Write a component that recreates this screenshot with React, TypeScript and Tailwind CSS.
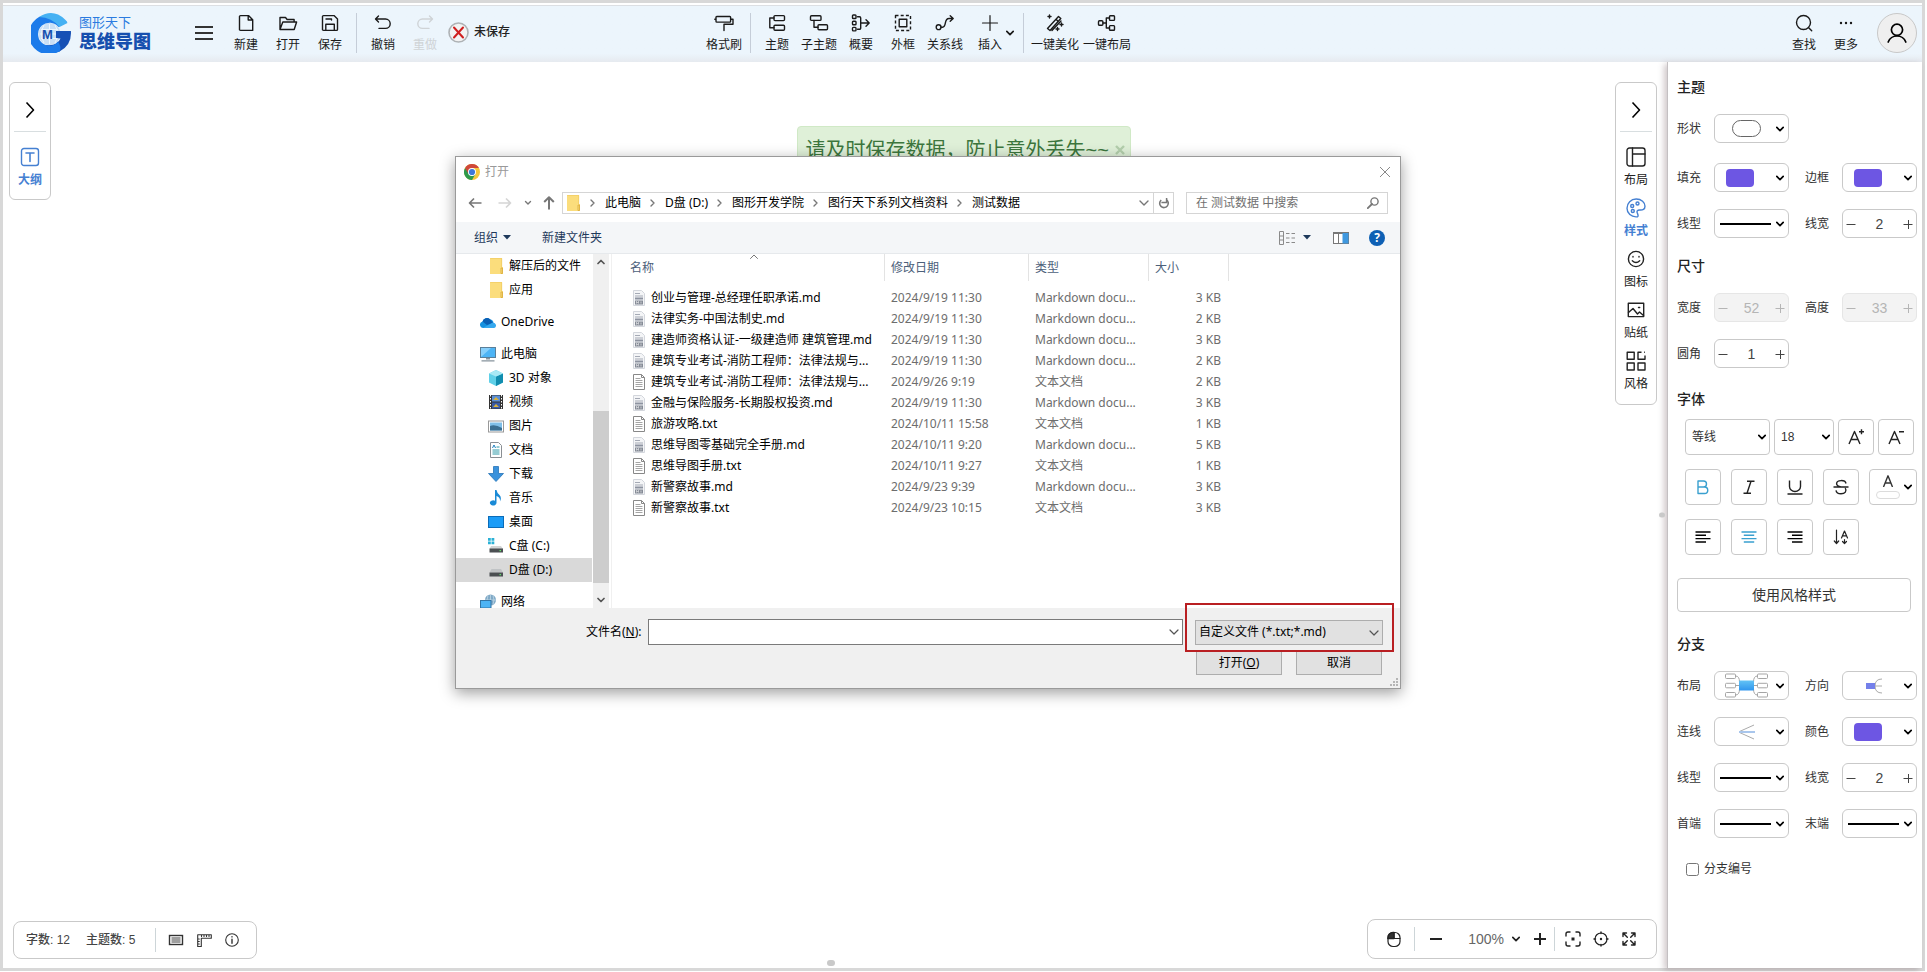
import { useState } from 'react';
import type { ReactNode } from 'react';

type IconProps = { children: ReactNode; size?: string; className?: string; box?: string };

function Icon({ children, size = 'w-5 h-5', className = '', box = '0 0 20 20' }: IconProps) {
  return (
    <svg
      viewBox={box}
      className={`${size} shrink-0 ${className}`}
      fill="none"
      stroke="currentColor"
      strokeWidth="1.4"
      strokeLinecap="round"
      strokeLinejoin="round"
      aria-hidden="true"
    >
      {children}
    </svg>
  );
}

function Caret({ className = '' }: { className?: string }) {
  return (
    <Icon size="w-2 h-2" box="0 0 8 8" className={className}>
      <path d="M0.8 2.4L4 5.6l3.2-3.2" strokeWidth="1.7" />
    </Icon>
  );
}

const fileTools = [
  {
    label: '新建',
    icon: <path d="M4.5 2.6h8l4.2 4.2v10.6H4.5a1 1 0 0 1-1-1V3.6a1 1 0 0 1 1-1zM12.2 2.8V7h4.3" />,
  },
  {
    label: '打开',
    icon: <path d="M2 16.500V4.5h5.500l1.600 2h7V9M2 16.500L4.800 9H18.600l-2.400 7.500z" />,
  },
  {
    label: '保存',
    icon: (
      <path d="M3.500 2.600H14l3.500 3.500v10.300a1 1 0 0 1-1 1h-13a1 1 0 0 1-1-1V3.600a1 1 0 0 1 1-1zM5.800 17.200v-6h8.500v6M6 6h5.500v1" />
    ),
  },
];

const topicTools = [
  {
    label: '主题',
    icon: (
      <>
        <rect x="7" y="2.6" width="10.5" height="5" rx="1" />
        <rect x="7" y="12.2" width="10.5" height="5" rx="1" />
        <path d="M7 5H2.800v9.700H7" />
      </>
    ),
  },
  {
    label: '子主题',
    icon: (
      <>
        <rect x="1.5" y="2.8" width="10.5" height="4.6" rx="1" />
        <rect x="9" y="11.8" width="9.5" height="5" rx="1" />
        <path d="M5 7.500v6.800h4" />
      </>
    ),
  },
  {
    label: '概要',
    icon: (
      <>
        <rect x="1.5" y="2" width="3.5" height="3.5" rx="0.8" />
        <rect x="1.5" y="8.2" width="3.5" height="3.5" rx="0.8" />
        <rect x="1.5" y="14.4" width="3.5" height="3.5" rx="0.8" />
        <path d="M6.500 3.700H8.500a1.200 1.200 0 0 1 1.200 1.200v10.200a1.200 1.200 0 0 1-1.200 1.200H6.500M10 10h8M15 6.800L18.200 10 15 13.200" />
      </>
    ),
  },
  {
    label: '外框',
    icon: (
      <>
        <rect x="2.5" y="2.5" width="15" height="15" strokeDasharray="3 2.2" strokeLinecap="butt" />
        <rect x="6.2" y="6.2" width="7.6" height="7.6" />
      </>
    ),
  },
  {
    label: '关系线',
    icon: (
      <>
        <circle cx="3.6" cy="14.2" r="2.4" />
        <path d="M6 14.200h1.500c4.500 0 1-8.700 6.500-8.700h4M15.200 2.700L18.200 5.500l-3 2.800" />
      </>
    ),
  },
];

function ToolButton({
  label,
  children,
  wide = 'w-[42px]',
  disabled = false,
  caret = false,
}: {
  label: string;
  children: ReactNode;
  wide?: string;
  disabled?: boolean;
  caret?: boolean;
}) {
  return (
    <button
      type="button"
      disabled={disabled}
      className={`relative flex flex-col items-center gap-1 whitespace-nowrap ${wide} ${
        disabled ? 'text-[#cfd3d6]' : 'text-[#1a1a1a]'
      }`}
    >
      <Icon>{children}</Icon>
      <span className="text-xs leading-4">{label}</span>
      {caret && <Caret className="absolute right-0 top-4" />}
    </button>
  );
}

function Divider() {
  return <span className="mx-[5px] h-10 w-px bg-[#c5cdd8]" />;
}

function Logo() {
  return (
    <div className="flex items-center gap-2">
      <svg viewBox="0 0 40 40" className="h-10 w-10" aria-hidden="true">
        <circle cx="18.5" cy="21" r="11" fill="#c9dff5" />
        <path
          d="M9 21h19M10 16.500h17M10 25.500h17M18.500 11v20M13 12q-5 9 0 18M24 12q5 9 0 18"
          stroke="#eef6fd"
          fill="none"
        />
        <path
          d="M36 9L27.500 14A11.500 11.500 0 1 0 27 29L29 38A20 20 0 1 1 8 4Q24 -1 36 9z"
          fill="#1c7bea"
        />
        <path d="M8 4Q22-5 34 6.500 36 8 36.500 10L28.500 14Q21 4.500 8 4z" fill="#45b1f3" />
        <path d="M25 18h14.900Q41 32 28.500 38.500 18 38 15 32 26 33.500 29.500 25.500L25 25z" fill="#1650b5" />
        <path d="M15 32q7 2.500 12-3.500 4 6 1.500 10L20 40z" fill="#1c7bea" />
        <text
          x="16.5"
          y="25.5"
          fontSize="13"
          fontWeight="700"
          fill="#164fae"
          textAnchor="middle"
          fontFamily="Liberation Sans"
        >
          M
        </text>
      </svg>
      <div className="flex flex-col">
        <span className="text-[13px] leading-[18px] text-[#2b7be0]">图形天下</span>
        <span className="text-lg font-black leading-5 text-[#164fae]">思维导图</span>
      </div>
    </div>
  );
}

function Header() {
  return (
    <header className="flex h-[57px] items-center border-t border-[#dcdfe3] bg-gradient-to-b from-[#ecf5fc] from-85% to-[#e6eaef] pb-0.5 pl-7 pr-[5px]">
      <Logo />
      <button type="button" aria-label="菜单" className="ml-11 flex w-[18px] flex-col gap-1">
        <span className="h-0.5 bg-[#333]" />
        <span className="h-0.5 bg-[#333]" />
        <span className="h-0.5 bg-[#333]" />
      </button>
      <div className="ml-3 flex">
        {fileTools.map((tool) => (
          <ToolButton key={tool.label} label={tool.label}>
            {tool.icon}
          </ToolButton>
        ))}
      </div>
      <Divider />
      <ToolButton label="撤销">
        <path d="M5.500 3L2.500 6l3 3M2.800 6h9.700a4.700 4.700 0 0 1 0 9.400H6" />
      </ToolButton>
      <ToolButton label="重做" disabled>
        <path d="M14.500 3l3 3-3 3M17.200 6H7.500a4.700 4.700 0 0 0 0 9.400H14" />
      </ToolButton>
      <span className="ml-0.5 flex items-center gap-[5px] pb-0.5 text-xs font-medium text-[#222]">
        <svg viewBox="0 0 21 21" className="h-[21px] w-[21px]" aria-hidden="true">
          <circle cx="10.5" cy="10.5" r="9.5" fill="#f3f3f3" stroke="#aeb2b5" strokeWidth="1.6" />
          <path d="M6 5.500l9 10M15 5.500l-9 10" stroke="#cf1f1f" strokeWidth="2" strokeLinecap="round" />
        </svg>
        未保存
      </span>

      <div className="ml-[193px] flex items-center">
        <ToolButton label="格式刷">
          <path d="M2.800 3.500h13a.8.8 0 0 1 .8.8v4a.8.8 0 0 1-.8.8h-13a.8.8 0 0 1-.8-.8v-4a.8.8 0 0 1 .8-.8zM.8 6.300H2M16.800 6.300h2.200v5h-9v2.200M10 13.500v4" />
        </ToolButton>
        <Divider />
        {topicTools.map((tool) => (
          <ToolButton key={tool.label} label={tool.label}>
            {tool.icon}
          </ToolButton>
        ))}
        <ToolButton label="插入" wide="w-12" caret>
          <path d="M10 2.500v15M2.500 10h15" strokeWidth="1.2" />
        </ToolButton>
        <span className="w-1" />
        <Divider />
        <ToolButton label="一键美化" wide="w-[52px]">
          <path d="M2.500 15.500L13.500 3.500l2.300 2L5 17.500zM7 17.500l9-9.500M11 6.200l2.300 2.200M4.500 2v3M3 3.500h3M16.500 10v3M15 11.500h3M12.500 14.500v3M11 16h3" />
        </ToolButton>
        <ToolButton label="一键布局" wide="w-[52px]">
          <rect x="1.5" y="7.8" width="4.4" height="4.4" rx="1" />
          <rect x="12.5" y="2.8" width="5" height="4.6" rx="0.8" />
          <rect x="12.5" y="12.6" width="5" height="4.6" rx="0.8" />
          <path d="M6 10h3.300M12.500 5H9.300v10h3.200" />
        </ToolButton>
      </div>

      <div className="ml-auto flex items-center">
        <ToolButton label="查找">
          <circle cx="9.5" cy="9.5" r="7" />
          <path d="M14.700 14.700l3 3" />
        </ToolButton>
        <ToolButton label="更多">
          <path d="M5 10h.01M10 10h.01M15 10h.01" strokeWidth="2.4" />
        </ToolButton>
        <button
          type="button"
          aria-label="账户"
          className="ml-2.5 flex h-10 w-10 items-center justify-center rounded-full border border-[#c8c8c8] bg-[#efefef]"
        >
          <Icon className="text-black">
            <circle cx="10" cy="6.8" r="5.6" strokeWidth="1.7" />
            <path d="M1.200 19c1.800-4.500 5-6 8.800-6s7 1.500 8.800 6" strokeWidth="1.7" />
          </Icon>
        </button>
      </div>
    </header>
  );
}

const sideTabs = [
  {
    label: '布局',
    icon: (
      <>
        <rect x="1" y="1" width="18" height="18" rx="2.5" />
        <path d="M6.500 1v18M6.500 7H19" />
      </>
    ),
  },
  {
    label: '样式',
    active: true,
    icon: (
      <>
        <path d="M11.500 18.800C5 19.600 1 15 1 10.200 1 5 5 1 10.200 1 15.500 1 19 4.500 19 8.200c0 3.300-2.500 4-5 3.800-2.500-.2-3.500 1.200-2.700 3 .7 1.500 1.200 3.400.2 3.800z" />
        <circle cx="6.2" cy="8" r="1.5" />
        <circle cx="11.5" cy="5.5" r="1.5" />
        <circle cx="6.8" cy="13" r="1.5" />
      </>
    ),
  },
  {
    label: '图标',
    icon: (
      <>
        <circle cx="10" cy="10" r="7.6" />
        <path d="M7 7.500v.5M13 7.500v.5M6.300 11.800q3.700 3.600 7.400 0" />
      </>
    ),
  },
  {
    label: '贴纸',
    icon: (
      <>
        <rect x="2.3" y="3.2" width="15.4" height="13.4" />
        <path d="M2.500 12.500l4.500-4 4.500 5.500 2-2 4 3.500M12.500 7.500h1.200" />
      </>
    ),
  },
  {
    label: '风格',
    icon: (
      <path
        d="M1.200 1.200h7v7h-7zM1.200 12h7v7h-7zM12 12h7v7h-7zM15.500 1.200H12v7h7V4.500M18.200 1.200h.8"
        strokeLinecap="butt"
      />
    ),
  },
];

function ExpandButton({ label }: { label: string }) {
  return (
    <button
      type="button"
      aria-label={label}
      className="flex h-[49px] w-8 items-center justify-center border-b border-[#d8dee0] pt-1.5"
    >
      <Icon className="text-black">
        <path d="M6.500 2.500l7 7.500-7 7.500" strokeLinecap="butt" strokeWidth="1.6" />
      </Icon>
    </button>
  );
}

function OutlineBar() {
  return (
    <div className="flex h-[118px] w-[42px] flex-col items-center rounded-md border border-[#c9c9c9] bg-white">
      <ExpandButton label="展开" />
      <button type="button" className="mt-[15px] flex flex-col items-center gap-[3px] text-[#4580d2]">
        <Icon>
          <rect x="1.5" y="1.5" width="17" height="17" rx="2.5" />
          <path d="M6 6h8M10 6v8.500" strokeWidth="1.6" />
        </Icon>
        <span className="text-xs font-bold leading-5">大纲</span>
      </button>
    </div>
  );
}

function StyleTabs() {
  return (
    <nav className="flex h-[323px] w-[42px] flex-col items-center rounded-md border border-[#c9c9c9] bg-white">
      <ExpandButton label="收起" />
      <div className="mt-[15px] flex flex-col gap-2">
        {sideTabs.map((tab) => (
          <button
            key={tab.label}
            type="button"
            className={`flex flex-col items-center gap-[3px] ${tab.active ? 'font-bold text-[#4580d2]' : 'text-[#222]'}`}
          >
            <Icon>{tab.icon}</Icon>
            <span className="text-xs leading-5">{tab.label}</span>
          </button>
        ))}
      </div>
    </nav>
  );
}

function StatusBar() {
  return (
    <div className="flex h-[38px] items-center rounded-lg border border-[#c9c9c9] bg-white pl-3 pr-3.5 text-xs font-medium text-[#444]">
      <span>字数: 12</span>
      <span className="ml-4">主题数: 5</span>
      <span className="ml-5 mr-2.5 h-6 w-px bg-[#cdd5d8]" />
      <div className="flex gap-2 text-[#333]">
        <button type="button" aria-label="键盘">
          <Icon>
            <rect x="3.5" y="5.5" width="13" height="9" strokeLinejoin="miter" />
            <path d="M5.500 8h9M5.500 10h9M5.500 12h9" strokeWidth="1.4" stroke="#808080" strokeLinecap="butt" />
          </Icon>
        </button>
        <button type="button" aria-label="标尺">
          <Icon>
            <path
              d="M3.700 4.700h13.600v3.500H7.300v8.300H3.700zM7.500 5v1.500M10 5v1.500M12.500 5v1.500M15 5v1.500M4 9h1.300M4 11.500h1.300M4 14h1.300"
              strokeWidth="1.1"
            />
          </Icon>
        </button>
        <button type="button" aria-label="信息">
          <Icon>
            <circle cx="10" cy="10" r="6.3" strokeWidth="1.1" />
            <path d="M10 9.300v4M10 6.600v.3" />
          </Icon>
        </button>
      </div>
    </div>
  );
}

function ZoomBar() {
  return (
    <div className="flex h-10 items-center rounded-lg border border-[#c9c9c9] bg-white pl-4 pr-[17px] text-[#222]">
      <button type="button" aria-label="鼠标">
        <Icon>
          <rect x="4" y="3.5" width="12" height="14" rx="5" strokeWidth="1.2" />
          <path d="M4 9.500h12M10 3.500v6" strokeWidth="1.2" />
          <path d="M4 9.500h6v-6H9a5 5 0 0 0-5 5z" fill="#333" />
        </Icon>
      </button>
      <span className="mx-2.5 h-6 w-px bg-[#cdd5d8]" />
      <button type="button" aria-label="缩小" className="ml-[5px]">
        <Icon size="w-3 h-3" box="0 0 12 12">
          <path d="M0 6h12" strokeWidth="2" strokeLinecap="butt" />
        </Icon>
      </button>
      <button type="button" className="ml-[26px] flex items-center gap-2 text-sm text-[#666]">
        100%
        <Caret className="text-[#222]" />
      </button>
      <button type="button" aria-label="放大" className="ml-3.5">
        <Icon size="w-3 h-3" box="0 0 12 12">
          <path d="M0 6h12M6 0v12" strokeWidth="2" strokeLinecap="butt" />
        </Icon>
      </button>
      <span className="mx-2 h-6 w-px bg-[#cdd5d8]" />
      <div className="flex gap-2">
        <button type="button" aria-label="聚焦">
          <Icon>
            <path d="M3 7V5a2 2 0 0 1 2-2h2M13 3h2a2 2 0 0 1 2 2v2M17 13v2a2 2 0 0 1-2 2h-2M7 17H5a2 2 0 0 1-2-2v-2" />
            <rect x="8.5" y="8.5" width="3" height="3" fill="currentColor" stroke="none" />
          </Icon>
        </button>
        <button type="button" aria-label="居中">
          <Icon>
            <circle cx="10" cy="10" r="6" strokeWidth="1.2" />
            <path d="M10 3v1.500M10 15.500V17M3 10h1.500M15.500 10H17" />
            <circle cx="10" cy="10" r="1.2" fill="currentColor" stroke="none" />
          </Icon>
        </button>
        <button type="button" aria-label="全屏">
          <Icon>
            <path d="M4 7.500V4h3.500M4.300 4.300l4 4M12.500 4H16v3.500M15.700 4.300l-4 4M16 12.500V16h-3.500M15.700 15.700l-4-4M7.500 16H4v-3.500M4.300 15.700l4-4" />
          </Icon>
        </button>
      </div>
    </div>
  );
}

function Field({ id, label, children }: { id: string; label: string; children: ReactNode }) {
  return (
    <div className="flex w-28 items-center">
      <label htmlFor={id} className="flex-1 text-xs leading-5">
        {label}
      </label>
      {children}
    </div>
  );
}

function Picker({ id, label, children }: { id: string; label: string; children: ReactNode }) {
  return (
    <Field id={id} label={label}>
      <button
        id={id}
        type="button"
        aria-haspopup="listbox"
        className="flex h-[29px] w-[75px] items-center rounded-md border border-[#c9c9c9] bg-white pr-1"
      >
        <span className="flex flex-1 justify-center">{children}</span>
        <Caret className="text-black" />
      </button>
    </Field>
  );
}

function Stepper({
  id,
  label,
  initial,
  disabled = false,
}: {
  id: string;
  label: string;
  initial: number;
  disabled?: boolean;
}) {
  const [value, setValue] = useState(initial);

  return (
    <Field id={id} label={label}>
      <div
        className={`flex h-[29px] w-[75px] items-center justify-between rounded-md border px-[3px] ${
          disabled ? 'border-[#e6e6e6] bg-[#f3f3f3] text-[#b5b5b5]' : 'border-[#c9c9c9] bg-white text-[#444]'
        }`}
      >
        <button type="button" aria-label="减少" disabled={disabled} onClick={() => setValue(value - 1)}>
          <Icon size="w-2.5 h-2.5" box="0 0 10 10">
            <path d="M0.500 5.500h9" strokeWidth="1" strokeLinecap="butt" />
          </Icon>
        </button>
        <input
          id={id}
          type="text"
          value={value}
          disabled={disabled}
          onChange={(e) => setValue(Number(e.target.value) || 0)}
          className="w-8 bg-transparent text-center text-sm leading-5 outline-none"
        />
        <button type="button" aria-label="增加" disabled={disabled} onClick={() => setValue(value + 1)}>
          <Icon size="w-2.5 h-2.5" box="0 0 10 10">
            <path d="M0.500 5.500h9M5.500 1v9" strokeWidth="1" strokeLinecap="butt" />
          </Icon>
        </button>
      </div>
    </Field>
  );
}

const Swatch = () => <span className="mr-3 h-[18px] w-7 rounded-sm bg-[#6d56e3]" />;
const Line = () => <span className="h-0.5 w-[51px] bg-black" />;

function SectionTitle({ children }: { children: ReactNode }) {
  return <h2 className="text-sm font-medium leading-5 text-[#222]">{children}</h2>;
}

function SquareButton({ label, active = false, children }: { label: string; active?: boolean; children: ReactNode }) {
  return (
    <button
      type="button"
      aria-label={label}
      className={`flex h-9 w-9 items-center justify-center rounded border border-[#c9c9c9] bg-white ${
        active ? 'text-[#3aa0cf]' : 'text-[#222]'
      }`}
    >
      {children}
    </button>
  );
}

function StylePanel() {
  return (
    <aside className="relative w-[255px] shrink-0 border-l border-[#c4c0c2] bg-white pb-2 pl-[9px] pr-[5px] pt-[15px] text-[#333] shadow-[-3px_2px_6px_rgba(90,60,70,0.28)]">
      <SectionTitle>主题</SectionTitle>
      <div className="mt-[17px]">
        <Picker id="shape" label="形状">
          <span className="ml-0.5 h-[17px] w-[29px] rounded-full border border-[#666]" />
        </Picker>
      </div>
      <div className="mt-5 flex flex-wrap justify-between gap-y-[17px]">
        <Picker id="fill" label="填充">
          <Swatch />
        </Picker>
        <Picker id="border" label="边框">
          <Swatch />
        </Picker>
        <Picker id="line" label="线型">
          <Line />
        </Picker>
        <Stepper id="line-width" label="线宽" initial={2} />
      </div>

      <div className="mt-[18px]">
        <SectionTitle>尺寸</SectionTitle>
      </div>
      <div className="mt-[17px] flex flex-wrap justify-between gap-y-[17px]">
        <Stepper id="width" label="宽度" initial={52} disabled />
        <Stepper id="height" label="高度" initial={33} disabled />
        <Stepper id="radius" label="圆角" initial={1} />
      </div>

      <div className="mt-[21px]">
        <SectionTitle>字体</SectionTitle>
      </div>
      <div className="mt-2.5 flex gap-1 pl-2">
        <div className="relative w-[85px]">
          <select
            aria-label="字体"
            className="h-9 w-full appearance-none rounded border border-[#c9c9c9] bg-white pl-1.5 text-xs"
          >
            <option>等线</option>
          </select>
          <Caret className="pointer-events-none absolute right-1 top-3.5 text-black" />
        </div>
        <div className="relative w-[60px]">
          <select
            aria-label="字号"
            className="h-9 w-full appearance-none rounded border border-[#c9c9c9] bg-white pl-1.5 text-xs"
          >
            <option>18</option>
          </select>
          <Caret className="pointer-events-none absolute right-1 top-3.5 text-black" />
        </div>
        <SquareButton label="增大字号">
          <Icon>
            <path d="M3 17L8.500 4.500 14 17M5 12.500h7M15.500 2.200v5M13 4.700h5" strokeLinecap="butt" />
          </Icon>
        </SquareButton>
        <SquareButton label="减小字号">
          <Icon>
            <path d="M3 17L8.500 4.500 14 17M5 12.500h7M13 4.700h5" strokeLinecap="butt" />
          </Icon>
        </SquareButton>
      </div>
      <div className="mt-3.5 flex gap-2.5 pl-2">
        <SquareButton label="加粗" active>
          <Icon>
            <path d="M5 4h5.500a3 3 0 0 1 0 6H5zM5 10h6.500a3.200 3.200 0 0 1 0 6.500H5z" />
          </Icon>
        </SquareButton>
        <SquareButton label="斜体">
          <Icon>
            <path d="M8 4.200h7.500M4.500 16.200H12M12 4.200L8 16.200" strokeLinecap="butt" />
          </Icon>
        </SquareButton>
        <SquareButton label="下划线">
          <Icon>
            <path d="M4.500 3.500v6a5.500 5 0 0 0 11 0v-6M2.500 17h15" strokeLinecap="butt" />
          </Icon>
        </SquareButton>
        <SquareButton label="删除线">
          <Icon>
            <path
              d="M15 6.500c-.8-4-9.200-3.800-9.400 0 0 2 2 3 4.400 3.500M2.500 10h15M14.200 11.200c2 2.800-.2 5.600-4.200 5.600-3.500 0-4.700-1.500-5-3.500"
              strokeLinecap="butt"
            />
          </Icon>
        </SquareButton>
        <button
          type="button"
          aria-label="文字颜色"
          className="flex h-9 w-12 items-center justify-between rounded border border-[#c9c9c9] bg-white pl-1.5 pr-1 text-[#333]"
        >
          <span className="flex flex-col items-center gap-1">
            <Icon size="w-3 h-3" box="0 0 12 12">
              <path d="M1.500 12L6 .8 10.500 12M3.200 8h5.600" strokeLinecap="butt" />
            </Icon>
            <span className="h-2 w-6 rounded-full border border-[#dcdcdc]" />
          </span>
          <Caret className="text-black" />
        </button>
      </div>
      <div className="mt-3.5 flex gap-2.5 pl-2">
        <SquareButton label="左对齐">
          <Icon className="text-black">
            <path d="M2.500 5h15M2.500 8.300H13M2.500 11.600h15M2.500 15H13" strokeLinecap="butt" />
          </Icon>
        </SquareButton>
        <SquareButton label="居中对齐" active>
          <Icon>
            <path d="M2.500 5h15M4.800 8.300h10.400M2.500 11.600h15M4.800 15h10.400" strokeLinecap="butt" />
          </Icon>
        </SquareButton>
        <SquareButton label="右对齐">
          <Icon className="text-black">
            <path d="M2.500 5h15M7 8.300h10.500M2.500 11.600h15M7 15h10.500" strokeLinecap="butt" />
          </Icon>
        </SquareButton>
        <SquareButton label="文字方向">
          <Icon>
            <path
              d="M5.500 3v13.500M3.300 14l2.200 2.500L7.700 14M10.500 11l3-7 3 7M11.500 8.800h4M13.500 12.500v4M11.500 14.500l2 2 2-2"
              strokeWidth="1.2"
            />
          </Icon>
        </SquareButton>
      </div>
      <div className="mt-[23px] pr-1.5">
        <button
          type="button"
          className="h-[34px] w-full rounded border border-[#c9c9c9] bg-white text-sm text-[#333]"
        >
          使用风格样式
        </button>
      </div>

      <div className="mt-[22px]">
        <SectionTitle>分支</SectionTitle>
      </div>
      <div className="mt-[17px] flex flex-wrap justify-between gap-y-[17px]">
        <Picker id="branch-layout" label="布局">
          <svg viewBox="0 0 43 25" className="ml-0.5 h-[25px] w-[43px]" fill="none" stroke="#a5a5a5" aria-hidden="true">
            <defs>
              <linearGradient id="node" x1="0" y1="0" x2="0" y2="1">
                <stop offset="0" stopColor="#62c3f5" />
                <stop offset="1" stopColor="#3096ee" />
              </linearGradient>
            </defs>
            <path d="M10.500 3q4 0 4 6M10.500 12.500h22M10.500 22q4 0 4-6M32.500 3q-4 0-4 6M32.500 22q-4 0-4-6" />
            <rect x="0.5" y="1" width="10" height="4.5" rx="1" fill="#fff" />
            <rect x="0.5" y="10.3" width="10" height="4.5" rx="1" fill="#fff" />
            <rect x="0.5" y="19.5" width="10" height="4.5" rx="1" fill="#fff" />
            <rect x="32.5" y="1" width="10" height="4.5" rx="1" fill="#fff" />
            <rect x="32.5" y="10.3" width="10" height="4.5" rx="1" fill="#fff" />
            <rect x="32.5" y="19.5" width="10" height="4.5" rx="1" fill="#fff" />
            <rect x="14" y="7.5" width="15" height="10" rx="1" fill="url(#node)" stroke="none" />
          </svg>
        </Picker>
        <Picker id="branch-direction" label="方向">
          <svg viewBox="0 0 16 16" className="h-4 w-4" fill="none" stroke="#aaa" aria-hidden="true">
            <path d="M16 1q-7 0-7 7 0 7 7 7M9 8h7" />
            <rect x="0" y="5" width="9" height="6" fill="#7480ea" stroke="none" />
          </svg>
        </Picker>
        <Picker id="branch-link" label="连线">
          <svg viewBox="0 0 16 16" className="ml-0.5 h-4 w-4" fill="none" stroke="#aaa" aria-hidden="true">
            <path d="M15 1L.5 7.500M15 15L.5 8.500" />
            <path d="M0 8h16" stroke="#a9c6ec" strokeWidth="2" />
          </svg>
        </Picker>
        <Picker id="branch-color" label="颜色">
          <Swatch />
        </Picker>
        <Picker id="branch-line" label="线型">
          <Line />
        </Picker>
        <Stepper id="branch-width" label="线宽" initial={2} />
        <Picker id="branch-start" label="首端">
          <Line />
        </Picker>
        <Picker id="branch-end" label="末端">
          <Line />
        </Picker>
      </div>
      <label className="mt-[21px] flex items-center gap-[5px] pl-[9px] text-xs leading-5">
        <input type="checkbox" className="h-[13px] w-[13px]" />
        分支编号
      </label>
    </aside>
  );
}

const path = ['此电脑', 'D盘 (D:)', '图形开发学院', '图行天下系列文档资料', '测试数据'];

const Folder = () => (
  <svg viewBox="0 0 16 16" className="h-4 w-4 shrink-0" aria-hidden="true">
    <path d="M2 0h12v9h1v7H2z" fill="#fbdd7c" />
    <path d="M13 10h1.500v5.500H13z" fill="#fbdd7c" stroke="#d9ab3a" strokeWidth="0.8" />
    <path d="M2.300.3h11.400v9" fill="none" stroke="#ecc558" strokeWidth="0.6" />
  </svg>
);

const treeIcons: Record<string, ReactNode> = {
  cloud: (
    <>
      <path d="M3 14a3.300 3.300 0 0 1-.5-6.500A4.500 4.500 0 0 1 10 5.300 4 4 0 0 1 13.500 9a2.600 2.600 0 0 1 0 5z" fill="#1590df" />
      <path d="M2.500 7.500A4.500 4.500 0 0 1 10 5.300L13 9l-6 2z" fill="#0a5fb4" />
      <path d="M3 14l8-4.500a3 3 0 0 1 5 2.500 2.400 2.400 0 0 1-2.500 2z" fill="#35a8ee" />
    </>
  ),
  pc: (
    <>
      <rect x="0.5" y="1.5" width="15" height="10" fill="#4db4f5" stroke="#5a7f99" />
      <path d="M1 11L11 2H1z" fill="#86cffb" />
      <path d="M6 12h4v1.500H6zM1.500 14.200h13v1.300h-13z" fill="#87949d" />
    </>
  ),
  cube: (
    <>
      <path d="M1 3.500L8 0l7 3.500v9L8 16l-7-3.500z" fill="#5fd0e8" />
      <path d="M8 6.500l7-3v9L8 16z" fill="#118daf" />
      <path d="M1 3.500L8 0l7 3.500-7 3z" fill="#a8e9f5" />
    </>
  ),
  film: (
    <>
      <rect x="1" y="1" width="14" height="14" fill="#333" />
      <rect x="4" y="1.5" width="8" height="6" fill="#5a8fd8" />
      <rect x="4" y="8.5" width="8" height="6" fill="#395aa5" />
      <path d="M5 6l3-3 3 3zM5 13l3-3 3 3z" fill="#d9b23c" />
      <path d="M2.500 1v14M13.500 1v14" stroke="#fff" strokeDasharray="1.5 1.5" />
    </>
  ),
  photo: (
    <>
      <rect x="0.5" y="3" width="15" height="11" fill="#fff" stroke="#999" />
      <rect x="2" y="4.5" width="12" height="8" fill="#7fbfe8" />
      <path d="M2 8q5-2 12 2v2.500H2z" fill="#3a6f92" />
    </>
  ),
  doc: (
    <>
      <path d="M2.500.5h8l3 3v12h-11z" fill="#fff" stroke="#8a8f94" />
      <path d="M4.500 8h7M4.500 10h7M4.500 12h7M8.500 5h3" stroke="#2d9aa8" />
      <path d="M4.500 6l1.500-3 1.500 3" fill="none" stroke="#1e7fc0" />
    </>
  ),
  down: <path d="M5.500.5h5v7h5l-7.500 8-7.500-8h5z" fill="#3a92dc" stroke="#2673b8" strokeWidth="0.8" />,
  music: <path d="M7 0h1.500q.5 3 3 5 2.500 2.500.5 6.500.5-4-3.500-5.500v7a3.300 2.600 0 1 1-1.500-2.300z" fill="#1a8ad6" />,
  desktop: <rect x="0.5" y="2.5" width="15" height="11" fill="#1b9cf7" stroke="#0b6cb8" />,
  driveC: (
    <>
      <path d="M0 0h2.800v2.800H0zM3.500 0h2.800v2.800H3.500zM0 3.500h2.800v2.800H0zM3.500 3.500h2.800v2.800H3.500z" fill="#2ab1d6" />
      <path d="M3 8h10l2 3H1.500z" fill="#d2d4d5" />
      <rect x="1.5" y="10.5" width="13.5" height="4" fill="#4b4f52" />
      <rect x="11.5" y="12" width="1.5" height="1.2" fill="#5ee06a" />
    </>
  ),
  driveD: (
    <>
      <path d="M3.500 7H13l2 3.500H1.500z" fill="#c0c3c5" />
      <rect x="1.5" y="10.5" width="13.5" height="4" fill="#4b4f52" />
      <rect x="11.5" y="12" width="1.5" height="1.2" fill="#5ee06a" />
    </>
  ),
  network: (
    <>
      <circle cx="10.5" cy="6" r="5.5" fill="#7fa9c6" />
      <path d="M10.500.5v11M5 6h11M8 1.500q-2 4.500 0 9M13 1.500q2 4.500 0 9" stroke="#c9dde9" strokeWidth="0.7" fill="none" />
      <rect x="0.5" y="6.5" width="10.5" height="7.5" fill="#4db4f5" stroke="#3274a5" />
    </>
  ),
};

const tree = [
  { label: '解压后的文件', icon: 'folder', indent: 'pl-8' },
  { label: '应用', icon: 'folder', indent: 'pl-8' },
  { label: 'OneDrive', icon: 'cloud', indent: 'pl-6 mt-2' },
  { label: '此电脑', icon: 'pc', indent: 'pl-6 mt-2' },
  { label: '3D 对象', icon: 'cube', indent: 'pl-8' },
  { label: '视频', icon: 'film', indent: 'pl-8' },
  { label: '图片', icon: 'photo', indent: 'pl-8' },
  { label: '文档', icon: 'doc', indent: 'pl-8' },
  { label: '下载', icon: 'down', indent: 'pl-8' },
  { label: '音乐', icon: 'music', indent: 'pl-8' },
  { label: '桌面', icon: 'desktop', indent: 'pl-8' },
  { label: 'C盘 (C:)', icon: 'driveC', indent: 'pl-8' },
  { label: 'D盘 (D:)', icon: 'driveD', indent: 'pl-8 bg-[#d9d9d9]' },
  { label: '网络', icon: 'network', indent: 'pl-6 mt-2' },
];

const files = [
  { name: '创业与管理-总经理任职承诺.md', date: '2024/9/19 11:30', size: '3 KB' },
  { name: '法律实务-中国法制史.md', date: '2024/9/19 11:30', size: '2 KB' },
  { name: '建造师资格认证-一级建造师 建筑管理.md', date: '2024/9/19 11:30', size: '3 KB' },
  { name: '建筑专业考试-消防工程师：法律法规与...', date: '2024/9/19 11:30', size: '2 KB' },
  { name: '建筑专业考试-消防工程师：法律法规与...', date: '2024/9/26 9:19', size: '2 KB', text: true },
  { name: '金融与保险服务-长期股权投资.md', date: '2024/9/19 11:30', size: '3 KB' },
  { name: '旅游攻略.txt', date: '2024/10/11 15:58', size: '1 KB', text: true },
  { name: '思维导图零基础完全手册.md', date: '2024/10/11 9:20', size: '5 KB' },
  { name: '思维导图手册.txt', date: '2024/10/11 9:27', size: '1 KB', text: true },
  { name: '新警察故事.md', date: '2024/9/23 9:39', size: '3 KB' },
  { name: '新警察故事.txt', date: '2024/9/23 10:15', size: '3 KB', text: true },
];

function FileIcon({ text = false }: { text?: boolean }) {
  return text ? (
    <svg viewBox="0 0 12 16" className="h-4 w-3 shrink-0" fill="none" aria-hidden="true">
      <path d="M.5.5h8l3 3v12H.5z" fill="#fff" stroke="#888" />
      <path d="M8.500.5v3h3" stroke="#888" />
      <path d="M2.500 4.500h5M2.500 6.500h7M2.500 8.500h7M2.500 10.500h7M2.500 12.500h7" stroke="#a5a5a5" />
    </svg>
  ) : (
    <svg viewBox="0 0 12 16" className="h-4 w-3 shrink-0" fill="none" aria-hidden="true">
      <path d="M.5.5h8l3 3v12H.5z" fill="#f4f5f7" stroke="#d3d6dc" />
      <path d="M2 3.500h5M2 6h8" stroke="#a5aab5" />
      <path d="M2 8.500h8" stroke="#8d93a0" strokeWidth="2" />
      <path d="M2 12.500h8" stroke="#858b96" strokeWidth="4" />
      <path d="M3.500 13.500v-2l1 1 1-1v2M8 11.500v2" stroke="#fff" strokeWidth="0.6" />
    </svg>
  );
}

const Triangle = () => (
  <svg viewBox="0 0 8 5" className="h-[5px] w-2" aria-hidden="true">
    <path d="M0 0h8L4 4.500z" fill="#1e395b" />
  </svg>
);

function OpenDialog() {
  return (
    <section
      role="dialog"
      aria-label="打开"
      className="absolute left-[455px] top-[156px] flex h-[533px] w-[946px] flex-col border border-[#9a9a9a] bg-white font-['Noto_Sans','Noto_Sans_CJK_SC',sans-serif] text-xs text-black shadow-[0_4px_14px_rgba(0,0,0,0.38)]"
    >
      <div className="flex h-[29px] items-center justify-between pl-2 pr-2.5">
        <div className="flex items-center gap-[5px] text-[#999]">
          <svg viewBox="0 0 16 16" className="h-4 w-4" aria-hidden="true">
            <circle cx="8" cy="8" r="8" fill="#f3c73b" />
            <path d="M8 8L1.070 4A8 8 0 0 0 8 16l3.500-6z" fill="#2e9a4c" />
            <path d="M8 8V4h6.930A8 8 0 0 0 1.070 4l3.500 6z" fill="#d0483a" />
            <circle cx="8" cy="8" r="4" fill="#fff" />
            <circle cx="8" cy="8" r="3.1" fill="#3d78d8" />
          </svg>
          打开
        </div>
        <button type="button" aria-label="关闭" className="text-[#888]">
          <Icon size="w-2.5 h-2.5" box="0 0 10 10">
            <path d="M0 0l10 10M10 0L0 10" strokeWidth="1" />
          </Icon>
        </button>
      </div>

      <div className="mt-1.5 flex h-[22px] items-center pl-[11px] pr-3 text-[#777]">
        <button type="button" aria-label="后退">
          <Icon size="w-4 h-4" box="0 0 16 16">
            <path d="M2.500 8h12M7 3.500L2.500 8 7 12.500" strokeWidth="1.7" strokeLinecap="butt" />
          </Icon>
        </button>
        <button type="button" aria-label="前进" className="ml-3.5 text-[#d5d5d5]">
          <Icon size="w-4 h-4" box="0 0 16 16">
            <path d="M1.500 8h12M9 3.500L13.500 8 9 12.500" strokeWidth="1.7" strokeLinecap="butt" />
          </Icon>
        </button>
        <button type="button" aria-label="历史" className="ml-[11px]">
          <Icon size="w-2 h-2" box="0 0 8 8">
            <path d="M1.500 2.500L4 5l2.500-2.500" />
          </Icon>
        </button>
        <button type="button" aria-label="上移" className="ml-[9px]">
          <Icon size="w-4 h-4" box="0 0 16 16">
            <path d="M8 14.500V2.500M3.200 7L8 2.200 12.800 7" strokeWidth="2" strokeLinecap="butt" />
          </Icon>
        </button>
        <div className="ml-[5px] flex h-[22px] flex-1 items-center border border-[#d5d5d5] pl-0.5">
          <Folder />
          <ol className="flex items-center text-black">
            {path.map((part) => (
              <li key={part} className="flex items-center">
                <Icon size="w-6 h-2" box="-8 0 24 8" className="text-[#777]">
                  <path d="M2 1l3 3-3 3" />
                </Icon>
                {part}
              </li>
            ))}
          </ol>
          <Icon size="w-2.5 h-2.5" box="0 0 10 10" className="ml-auto mr-1">
            <path d="M1 3l4 4 4-4" />
          </Icon>
          <button
            type="button"
            aria-label="刷新"
            className="flex h-full w-5 items-center justify-center border-l border-[#d5d5d5]"
          >
            <Icon size="w-3 h-3" box="0 0 12 12">
              <path d="M8.200 2.600A4.300 4.300 0 1 1 3.200 3" strokeWidth="1.6" strokeLinecap="butt" />
              <path d="M8 6V.8H3.500" strokeWidth="1.5" strokeLinecap="butt" strokeLinejoin="miter" transform="rotate(90 6 3.400)" />
            </Icon>
          </button>
        </div>
        <div className="ml-3 flex h-[22px] w-[202px] items-center border border-[#d5d5d5] pl-[9px] pr-2">
          <input
            type="search"
            aria-label="搜索"
            placeholder="在 测试数据 中搜索"
            className="w-full outline-none placeholder:text-[#707070]"
          />
          <Icon size="w-3 h-3" box="0 0 12 12">
            <circle cx="7.5" cy="4.5" r="3.6" />
            <path d="M5 7L.8 11.200" strokeWidth="1.8" />
          </Icon>
        </div>
      </div>

      <div className="mt-2 flex h-8 items-center border-b border-[#e6e9ec] bg-[#f4f6f8] pl-[18px] pr-[15px] text-[#1e395b]">
        <button type="button" className="flex items-center gap-[5px]">
          组织 <Triangle />
        </button>
        <button type="button" className="ml-[31px]">
          新建文件夹
        </button>
        <button type="button" aria-label="视图" className="ml-auto flex items-center gap-2">
          <Icon size="w-4 h-4" box="0 0 16 16" className="text-[#8a8a8a]">
            <path
              d="M.5 1.500h4v13h-4zM.5 6h4M.5 10h4M7 3.500h3.500M12.500 3.500H16M7 8h3.500M12.500 8H16M7 12.500h3.500M12.500 12.500H16"
              strokeWidth="1"
              strokeLinecap="butt"
            />
          </Icon>
          <Triangle />
        </button>
        <button type="button" aria-label="预览窗格" className="ml-[22px]">
          <svg viewBox="0 0 16 12" className="h-3 w-4" aria-hidden="true">
            <rect x="0.5" y="0.5" width="15" height="11" fill="#fff" stroke="#777" />
            <path d="M.5 1.500h15M5.500 1v10.500" stroke="#777" />
            <rect x="9.5" y="1" width="6" height="10.5" fill="#3f98df" />
          </svg>
        </button>
        <button
          type="button"
          className="ml-5 h-4 w-4 rounded-full bg-[#0e60b4] text-center text-xs font-bold leading-4 text-white"
        >
          ?
        </button>
      </div>

      <div className="flex min-h-0 flex-1">
        <ul className="w-[136px] overflow-hidden">
          {tree.map((node) => (
            <li key={node.label} className={`flex h-6 items-center gap-[5px] leading-4 ${node.indent}`}>
              {node.icon === 'folder' ? (
                <Folder />
              ) : (
                <svg viewBox="0 0 16 16" className="h-4 w-4 shrink-0" aria-hidden="true">
                  {treeIcons[node.icon]}
                </svg>
              )}
              {node.label}
            </li>
          ))}
        </ul>
        <div className="ml-px flex w-4 flex-col items-center bg-[#f0f0f0] text-[#555]">
          <Icon size="w-2 h-4" box="0 0 8 16">
            <path d="M1 9.500l3-3 3 3" strokeWidth="1.7" />
          </Icon>
          <span className="mt-auto h-[172px] w-full bg-[#cdcdcd]" />
          <Icon size="w-2 h-4" box="0 0 8 16" className="mt-[9px]">
            <path d="M1 6.500l3 3 3-3" strokeWidth="1.7" />
          </Icon>
        </div>
        <div className="relative ml-0.5 flex-1 border-l border-[#f0f0f0]">
          <Icon size="w-2 h-2" box="0 0 8 8" className="absolute left-[138px] top-0 text-[#777]">
            <path d="M.5 4.500L4 1l3.500 3.500" strokeWidth="1" />
          </Icon>
          <table className="w-[617px] table-fixed border-collapse">
            <thead>
              <tr className="text-left align-top text-[#4c607a]">
                <th className="h-[33px] w-[273px] p-0 font-normal">
                  <div className="flex h-[27px] items-center border-r border-[#e3e3e3] pl-[18px]">名称</div>
                </th>
                <th className="w-36 p-0 font-normal">
                  <div className="flex h-[27px] items-center border-r border-[#e3e3e3] pl-1.5">修改日期</div>
                </th>
                <th className="w-[120px] p-0 font-normal">
                  <div className="flex h-[27px] items-center border-r border-[#e3e3e3] pl-1.5">类型</div>
                </th>
                <th className="w-20 p-0 font-normal">
                  <div className="flex h-[27px] items-center border-r border-[#e3e3e3] pl-1.5">大小</div>
                </th>
              </tr>
            </thead>
            <tbody className="text-[#6d6d6d]">
              {files.map((file, index) => (
                <tr key={index} className="h-[21px] whitespace-nowrap leading-5">
                  <td className="p-0 pl-[21px] text-black">
                    <span className="flex items-center gap-1.5">
                      <FileIcon text={file.text} />
                      {file.name}
                    </span>
                  </td>
                  <td className="p-0 pl-1.5">{file.date}</td>
                  <td className="p-0 pl-1.5">{file.text ? '文本文档' : 'Markdown docu...'}</td>
                  <td className="p-0 pr-2 text-right">{file.size}</td>
                </tr>
              ))}
            </tbody>
          </table>
        </div>
      </div>

      <div className="relative h-20 bg-[#f0f0f0] pl-[130px] pr-[17px] pt-[11px]">
        <div className="flex items-center">
          <label htmlFor="file-name" className="w-[62px] whitespace-nowrap">
            文件名(<u>N</u>):
          </label>
          <div className="relative flex-1">
            <input
              id="file-name"
              type="text"
              className="block h-[26px] w-full border border-[#7a7a7a] bg-white px-1 outline-none"
            />
            <Icon size="w-2.5 h-2.5" box="0 0 10 10" className="absolute right-1 top-2 text-[#555]">
              <path d="M1 3l4 4 4-4" strokeWidth="1.2" />
            </Icon>
          </div>
          <div className="relative ml-3 w-[188px]">
            <select
              aria-label="文件类型"
              className="block h-[25px] w-full appearance-none border border-[#adadad] bg-[#e1e1e1] pl-[3px]"
            >
              <option>自定义文件 (*.txt;*.md)</option>
            </select>
            <Icon
              size="w-2.5 h-2.5"
              box="0 0 10 10"
              className="pointer-events-none absolute right-1 top-2 text-[#555]"
            >
              <path d="M1 3l4 4 4-4" strokeWidth="1.2" />
            </Icon>
          </div>
        </div>
        <div className="mt-1.5 flex justify-end gap-3.5 pr-px">
          <button type="button" className="h-6 w-[86px] border border-[#adadad] bg-[#e1e1e1]">
            打开(<u>O</u>)
          </button>
          <button type="button" className="h-6 w-[86px] border border-[#adadad] bg-[#e1e1e1]">
            取消
          </button>
        </div>
        <svg viewBox="0 0 8 8" className="absolute bottom-0.5 right-0.5 h-2 w-2" fill="#b5b5b5" aria-hidden="true">
          <path d="M6 0h2v2H6zM3 3h2v2H3zM6 3h2v2H6zM0 6h2v2H0zM3 6h2v2H3zM6 6h2v2H6z" />
        </svg>
        <div className="pointer-events-none absolute -top-[5px] right-1.5 h-[49px] w-[209px] border-2 border-[#b91f22]" />
      </div>
    </section>
  );
}

export default function App() {
  return (
    <div
      lang="zh-CN"
      className="relative flex min-h-screen bg-white pb-px pr-0.5 font-['Liberation_Sans','Noto_Sans_CJK_SC',sans-serif]"
    >
      <div className="flex flex-1 flex-col border-[3px] border-[#d8d8d8] pt-0.5">
        <Header />
        <div className="flex flex-1">
          <main className="relative flex flex-1 flex-col justify-between pb-[9px] pt-5">
            <div className="flex items-start justify-between pl-1.5 pr-2.5">
              <OutlineBar />
              <StyleTabs />
            </div>
            <div className="flex items-end justify-between px-2.5">
              <StatusBar />
              <ZoomBar />
            </div>
            <span className="absolute bottom-0.5 left-1/2 h-1.5 w-2 -translate-x-full rounded-full bg-[#c9c9c9]" />
            <span className="absolute right-0.5 top-1/2 z-10 h-[5px] w-1.5 -translate-y-1/2 rounded-full bg-[#c9c9c9]" />
          </main>
          <StylePanel />
        </div>
      </div>
      <div
        role="alert"
        className="absolute left-1/2 top-[126px] flex h-12 w-[334px] -translate-x-1/2 items-center gap-1.5 rounded border border-[#d0e9c6] bg-[#dff0d8] px-2 text-xl text-[#3c763d]"
      >
        <span className="whitespace-nowrap">请及时保存数据，防止意外丢失~~</span>
        <button type="button" aria-label="关闭提示" className="text-[#b3cfac]">
          <Icon size="w-2.5 h-2.5" box="0 0 10 10">
            <path d="M1 1l8 8M9 1L1 9" strokeWidth="2.4" strokeLinecap="butt" />
          </Icon>
        </button>
      </div>
      <OpenDialog />
    </div>
  );
}
